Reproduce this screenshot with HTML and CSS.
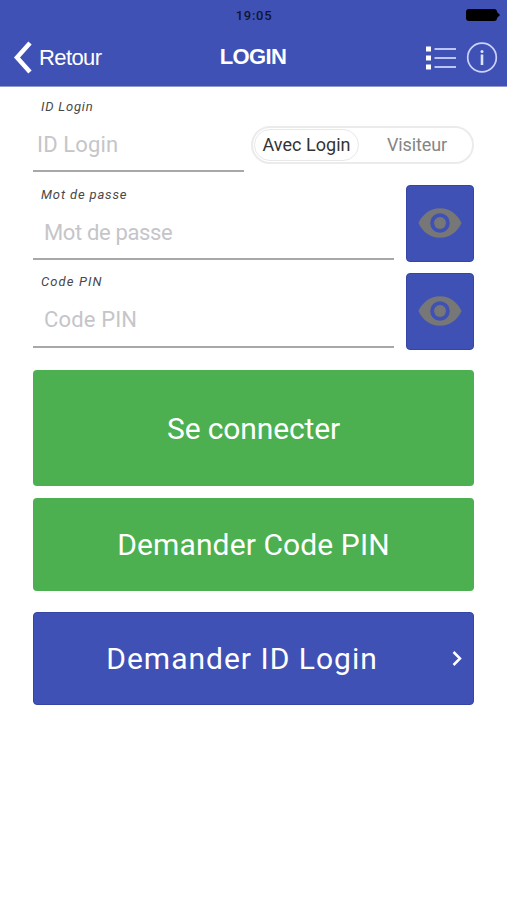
FILE: index.html
```html
<!DOCTYPE html>
<html lang="fr">
<head>
<meta charset="utf-8">
<title>Login</title>
<link rel="stylesheet" href="styles.css">
</head>
<body>
<header class="header">
  <div class="status">
    <span class="clock">19:05</span>
    <svg class="battery" width="36" height="14" viewBox="0 0 36 14"><rect x="1" y="1" width="31" height="12" rx="3"/><path d="M31 3L35 7L31 11Z"/></svg>
  </div>
  <nav class="nav">
    <a class="back">
      <svg width="20" height="34" viewBox="0 0 20 34"><path d="M18 2L5 16.500L18 31" fill="none" stroke="#fff" stroke-width="4.500"/></svg>
      <span class="back-text">Retour</span>
    </a>
    <h1 class="title">LOGIN</h1>
    <div class="tools">
      <svg width="32" height="26" viewBox="0 0 32 26"><path fill="#fff" d="M1 1.500h5v5H1zM1 10.500h5v5H1zM1 19.500h5v5H1z"/><path d="M9.500 4h21.500M9.500 13h21.500M9.500 22h21.500" stroke="#bcc5f5" stroke-width="2"/></svg>
      <svg width="32" height="32" viewBox="0 0 32 32"><circle cx="16" cy="15.500" r="14.300" fill="none" stroke="#cbd2fa" stroke-width="1.700"/><path d="M16 12.500v10.500" stroke="#dde2ff" stroke-width="2.600"/><circle cx="16" cy="9.500" r="1.500" fill="#dde2ff"/></svg>
    </div>
  </nav>
</header>
<main class="form">
  <div class="row">
    <div class="field field-id"><label class="label">ID Login</label><span class="hint hint-id">ID Login</span></div>
    <div class="toggle"><span class="option active">Avec Login</span><span class="option visitor">Visiteur</span></div>
  </div>
  <div class="row">
    <div class="field"><label class="label label-pass">Mot de passe</label><span class="hint hint-pass">Mot de passe</span></div>
    <button class="eye"><svg width="44" height="30" viewBox="0 0 44 30"><path fill="#777" fill-rule="evenodd" d="M.5 15C4.500 6 12.500.2 22 .2S39.500 6 43.500 15C39.500 24 31.500 29.800 22 29.800S4.500 24 .5 15ZM22 5.200a9.800 9.800 0 1 0 0 19.600a9.800 9.800 0 1 0 0-19.600Z"/><circle cx="22" cy="15" r="6" fill="#777"/></svg></button>
  </div>
  <div class="row">
    <div class="field"><label class="label label-pin">Code PIN</label><span class="hint hint-pin">Code PIN</span></div>
    <button class="eye"><svg width="44" height="30" viewBox="0 0 44 30"><path fill="#777" fill-rule="evenodd" d="M.5 15C4.500 6 12.500.2 22 .2S39.500 6 43.500 15C39.500 24 31.500 29.800 22 29.800S4.500 24 .5 15ZM22 5.200a9.800 9.800 0 1 0 0 19.600a9.800 9.800 0 1 0 0-19.600Z"/><circle cx="22" cy="15" r="6" fill="#777"/></svg></button>
  </div>
  <button class="action connect">Se connecter</button>
  <button class="action pin">Demander Code PIN</button>
  <button class="action login"><span class="login-text">Demander ID Login</span><svg width="12" height="18" viewBox="0 0 12 18"><path d="M1.500 2L8 8.500L1.500 15" fill="none" stroke="#fff" stroke-width="2.500"/></svg></button>
</main>
</body>
</html>
```
FILE: styles.css
```css
* { box-sizing: border-box; }
body { margin: 0; height: 900px; overflow: hidden; background: #fff; font-family: Roboto, sans-serif; }
button { border: 0; padding: 0; font: inherit; color: #fff; display: flex; align-items: center; justify-content: center; }
svg { display: block; flex: none; }
.header { height: 87px; background: #3f51b5; border-bottom: 1px solid #9099c9; color: #fff; }
.status { height: 29px; display: grid; grid-template-columns: 1fr auto 1fr; align-items: center; padding: 0 6px 0 7px; }
.clock { grid-column: 2; font-size: 13px; font-weight: 500; letter-spacing: .7px; color: #111633; line-height: 15px; padding-top: 1px; }
.battery { justify-self: end; }
.nav { height: 57px; display: grid; grid-template-columns: 1fr auto 1fr; align-items: center; padding: 0 9px 0 12px; }
.back { display: flex; align-items: center; gap: 7px; }
.back-text { font: 22px/26px "Liberation Sans", sans-serif; letter-spacing: -.6px; }
.title { margin: 0 4px 0 0; font: bold 22px/26px "Liberation Sans", sans-serif; padding-bottom: 2px; letter-spacing: -.6px; }
.tools { display: flex; align-items: center; justify-content: flex-end; gap: 9px; }
.form { padding: 10px 33px 0; display: flex; flex-direction: column; }
.row { display: flex; justify-content: space-between; height: 77px; margin-bottom: 11px; }
.field { width: 361px; height: 75px; border-bottom: 2px solid #a8a8a8; display: flex; flex-direction: column; align-items: flex-start; }
.field-id { width: 211px; }
.label { margin: 2px 0 0 8px; font-size: 13px; line-height: 16px; font-style: italic; color: #484848; letter-spacing: .8px; }
.label-pass { letter-spacing: .85px; }
.label-pin { margin-top: 1px; letter-spacing: 1.100px; }
.hint { margin: 17px 0 0 11px; font-size: 22px; line-height: 26px; color: #c5c5c9; letter-spacing: .15px; }
.hint-id { margin-left: 4px; }
.hint-pass { letter-spacing: -.35px; }
.toggle { width: 223px; height: 38px; margin-top: 29px; border: 2px solid #ebebeb; border-radius: 19px; display: flex; padding: 1px; }
.option { flex: 1; display: flex; align-items: center; justify-content: center; font-size: 18px; line-height: 22px; color: #858585; letter-spacing: .05px; padding-bottom: 1px; }
.active { flex: 0 0 105px; border: 1px solid #e8e8e8; border-radius: 16px; color: #333; }
.visitor { padding-left: 4px; letter-spacing: -.1px; }
.eye { width: 68px; height: 77px; background: #3f51b5; border: 1px solid #3545a3; border-radius: 4px; }
.eye svg { margin-bottom: 1px; }
.action { height: 93px; border-radius: 4px; font-size: 30px; line-height: 36px; background: #4caf50; }
.connect { height: 116px; margin-top: 9px; margin-bottom: 12px; padding-top: 2px; letter-spacing: -.15px; }
.pin { margin-bottom: 21px; letter-spacing: .1px; }
.login { background: #3f51b5; border: 1px solid #3545a3; display: grid; grid-template-columns: 1fr 12px; padding-right: 9px; }
.login-text { padding-right: 2px; letter-spacing: 1px; }
```
